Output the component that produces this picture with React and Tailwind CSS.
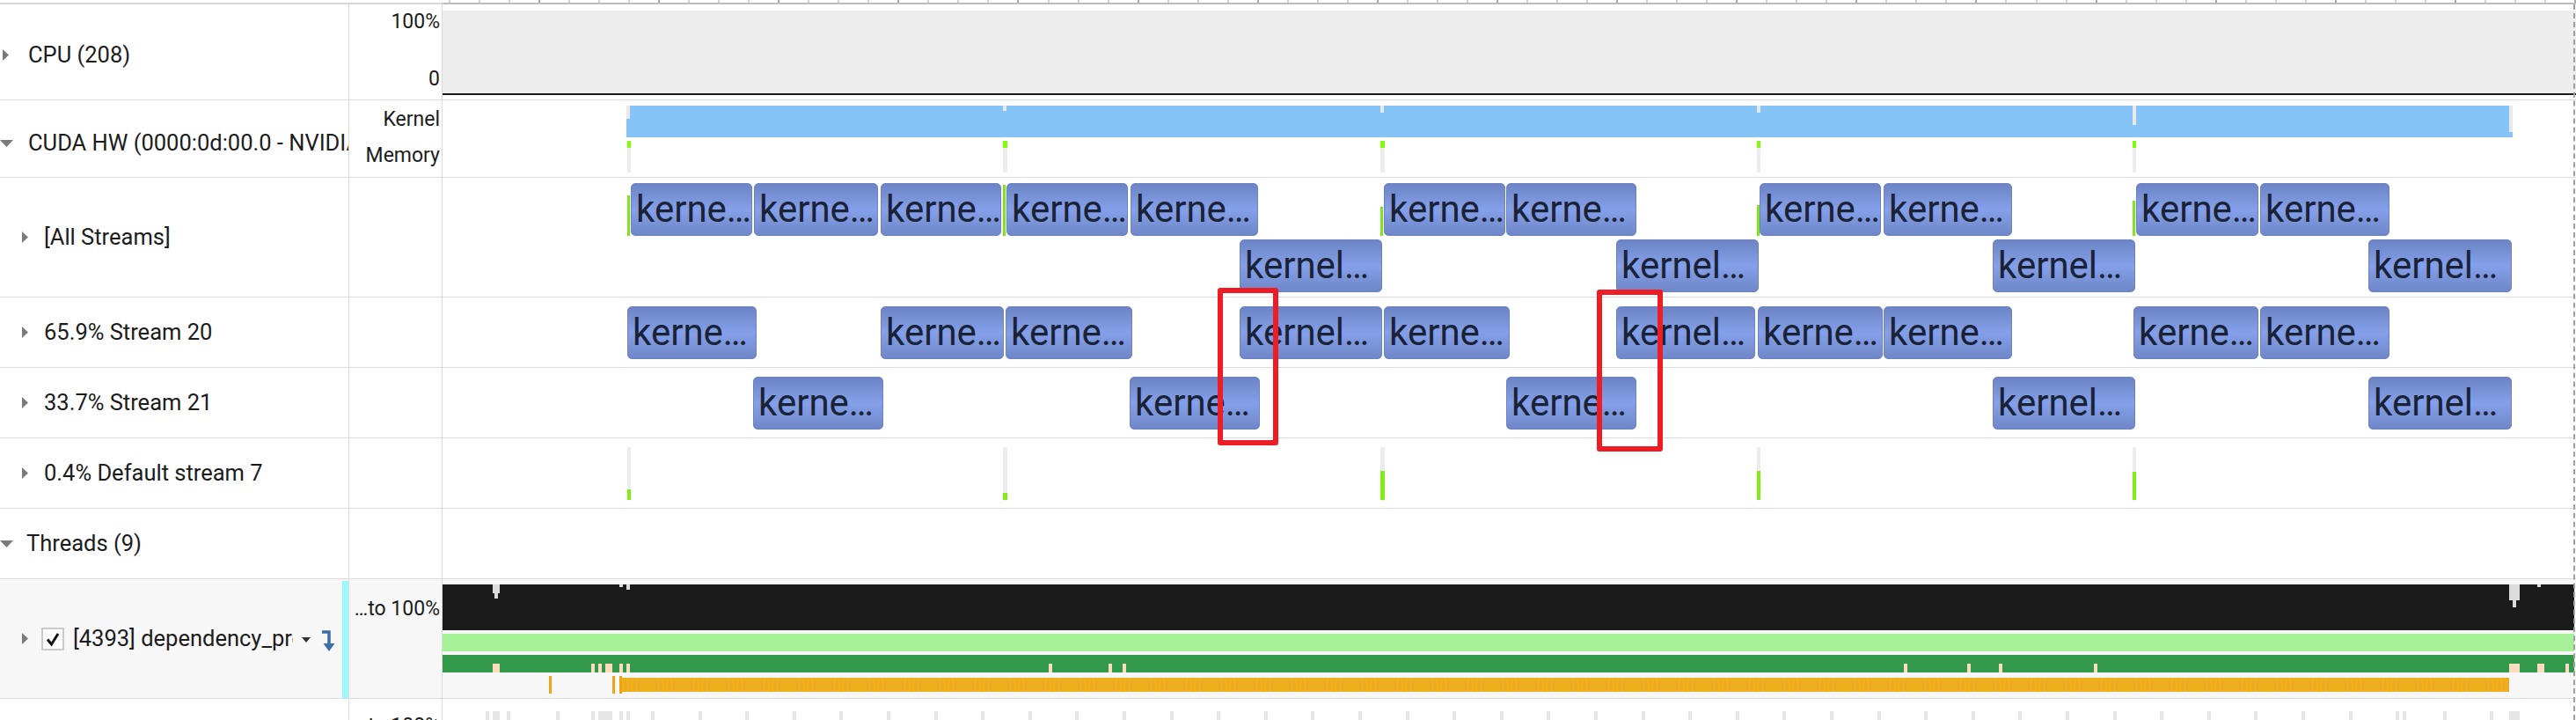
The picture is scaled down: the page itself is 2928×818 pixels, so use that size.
import React from "react";

const T0 = 503;

const allTop = [[717, 855], [857, 998], [1001, 1138], [1144, 1282], [1285, 1430], [1573, 1711], [1712, 1860], [2000, 2138], [2141, 2287], [2428, 2567], [2569, 2716]];
const allBottom = [[1409, 1571], [1837, 1999], [2265, 2427], [2692, 2855]];
const s20 = [[713, 860], [1001, 1141], [1143, 1287], [1409, 1571], [1573, 1716], [1837, 1995], [1998, 2140], [2141, 2287], [2425, 2567], [2569, 2716]];
const s21 = [[856, 1004], [1284, 1432], [1712, 1860], [2265, 2427], [2692, 2855]];

// memory / launch markers at the start of each iteration
const marks = [
  { x: 713, w: 4, streamTop: 222, defGreen: 556 },
  { x: 1140, w: 5, streamTop: 210, defGreen: 560 },
  { x: 1569, w: 5, streamTop: 235, defGreen: 535 },
  { x: 1997, w: 4, streamTop: 233, defGreen: 535 },
  { x: 2424, w: 4, streamTop: 228, defGreen: 536 },
];

const peach = [[560, 8], [672, 4], [680, 4], [688, 8], [704, 4], [712, 4], [1192, 4], [1260, 4], [1276, 4], [2164, 4], [2236, 4], [2272, 4], [2380, 4], [2852, 12], [2884, 8], [2916, 4]];

const lowTicks = (() => {
  const xs = [[552, 4], [560, 8], [576, 4], [632, 4], [672, 4], [680, 16], [704, 4], [712, 4]];
  for (let x = 740; x < 2840; x += 53.6) xs.push([Math.round(x), 4]);
  xs.push([2731, 4], [2852, 12]);
  return xs;
})();

const rulerTicks = (() => {
  const t = [];
  for (let k = -3; k <= 68; k++) t.push({ x: 612 + 34.03 * k, major: k % 4 === 0 });
  return t;
})();

function RightTri() {
  return (
    <svg width="8" height="13" viewBox="0 0 8 13" className="shrink-0">
      <polygon points="0,0 7,6.5 0,13" fill="#7a7a7a" />
    </svg>
  );
}

function DownTri() {
  return (
    <svg width="15" height="8" viewBox="0 0 15 8" className="shrink-0">
      <polygon points="0,0 15,0 7.5,8" fill="#7a7a7a" />
    </svg>
  );
}

function Kernel({ a, b, top }) {
  const label = b - a >= 155 ? "kernel…" : "kerne…";
  return (
    <div
      className="absolute h-[60px] rounded-[5px] border border-[#6b83c2] bg-[linear-gradient(180deg,#6c84c4_0%,#85a0ea_50%,#6f87c7_100%)] overflow-hidden whitespace-nowrap pl-[5px] text-[42px] leading-[57px] text-[#1a2236]"
      style={{ left: a - T0, width: b - a, top }}
    >
      {label}
    </div>
  );
}

function Row({ h, label, value, children, bg = "" }) {
  return (
    <div className={`flex border-b border-[#dcdcdc] ${h} ${bg}`}>
      <div className="w-[397px] shrink-0 border-r border-[#dcdcdc] overflow-hidden relative">{label}</div>
      <div className="w-[106px] shrink-0 border-r border-[#dcdcdc] relative">{value}</div>
      <div className="flex-1 relative">{children}</div>
    </div>
  );
}

export default function App() {
  return (
    <div className="relative w-[2928px] h-[818px] overflow-hidden bg-white font-['Roboto',sans-serif] text-[25.5px] text-[#1c1c1c]">
      {/* ruler */}
      <div className="flex h-[5px]">
        <div className="w-[503px] shrink-0 border-b-2 border-[#d6d6d6]" />
        <div className="flex-1 relative border-b-2 border-[#bcbcbc]">
          {rulerTicks.map((t, i) => (
            <div
              key={i}
              className={`absolute top-0 h-[3px] w-[2px] ${t.major ? "bg-[#a9a9a9]" : "bg-[#d2d2d2]"}`}
              style={{ left: t.x - T0 }}
            />
          ))}
        </div>
      </div>

      {/* CPU */}
      <Row
        h="h-[109px]"
        label={
          <div className="flex items-center h-full pl-[3px] gap-[21px] pt-[6px]">
            <RightTri />
            <span>CPU (208)</span>
          </div>
        }
        value={
          <div className="flex flex-col items-end h-full pr-[2px] text-[23px] leading-none pt-[8px]">
            <span>100%</span>
            <span className="mt-[42px]">0</span>
          </div>
        }
      >
        <div className="absolute left-0 right-0 top-[7px] h-[94px] bg-[#ededed]" />
        <div className="absolute left-0 right-0 top-[101px] h-[2px] bg-[#1a1a1a]" />
      </Row>

      {/* CUDA HW */}
      <Row
        h="h-[88px]"
        label={
          <div className="flex items-center h-full gap-[17px] pt-[10px] whitespace-nowrap">
            <DownTri />
            <span>CUDA HW (0000:0d:00.0 - NVIDIA A100-SXM4-80GB)</span>
          </div>
        }
        value={
          <div className="flex flex-col items-end gap-[17px] pr-[2px] text-[23px] leading-[24px] pt-[10px]">
            <span>Kernel</span>
            <span>Memory</span>
          </div>
        }
      >
        <div className="absolute top-[6px] h-[36px] bg-[#86c3f6]" style={{ left: 712 - T0, width: 2856 - 712 }} />
        {[[712, 15], [1140, 6], [1569, 8], [1997, 8], [2424, 22], [2852, 30]].map(([x, hh], i) => (
          <div key={i} className="absolute top-[6px] w-[4px] bg-[#e8e8e8]" style={{ left: x - T0, height: hh }} />
        ))}
        {marks.map((m, i) => (
          <div key={i} className="absolute top-[46px] h-[36px] flex flex-col" style={{ left: m.x - T0, width: m.w }}>
            <div className="h-[8px] bg-[#7fff00]" />
            <div className="flex-1 bg-[#ececec]" />
          </div>
        ))}
      </Row>

      {/* All Streams */}
      <Row
        h="h-[136px]"
        label={
          <div className="flex items-center h-full pl-[25px] gap-[17px]">
            <RightTri />
            <span>[All Streams]</span>
          </div>
        }
      >
        {marks.map((m, i) => (
          <div
            key={i}
            className="absolute w-[3px] bg-[#7fe41a]"
            style={{ left: m.x - T0, top: m.streamTop - 202, height: 268 - m.streamTop }}
          />
        ))}
        {allTop.map(([a, b], i) => (
          <Kernel key={i} a={a} b={b} top={6} />
        ))}
        {allBottom.map(([a, b], i) => (
          <Kernel key={i} a={a} b={b} top={70} />
        ))}
      </Row>

      {/* Stream 20 */}
      <Row
        h="h-[80px]"
        label={
          <div className="flex items-center h-full pl-[25px] gap-[17px]">
            <RightTri />
            <span>65.9% Stream 20</span>
          </div>
        }
      >
        {s20.map(([a, b], i) => (
          <Kernel key={i} a={a} b={b} top={10} />
        ))}
      </Row>

      {/* Stream 21 */}
      <Row
        h="h-[80px]"
        label={
          <div className="flex items-center h-full pl-[25px] gap-[17px]">
            <RightTri />
            <span>33.7% Stream 21</span>
          </div>
        }
      >
        {s21.map(([a, b], i) => (
          <Kernel key={i} a={a} b={b} top={10} />
        ))}
      </Row>

      {/* Default stream 7 */}
      <Row
        h="h-[80px]"
        label={
          <div className="flex items-center h-full pl-[25px] gap-[17px]">
            <RightTri />
            <span>0.4% Default stream 7</span>
          </div>
        }
      >
        {marks.map((m, i) => (
          <div key={i} className="absolute top-[10px] h-[60px] flex flex-col" style={{ left: m.x - T0, width: m.w }}>
            <div className="bg-[#ececec]" style={{ height: m.defGreen - 508 }} />
            <div className="flex-1 bg-[#7fee10]" />
          </div>
        ))}
      </Row>

      {/* Threads */}
      <Row
        h="h-[80px]"
        label={
          <div className="flex items-center h-full gap-[15px]">
            <DownTri />
            <span>Threads (9)</span>
          </div>
        }
      />

      {/* thread */}
      <Row
        h="h-[136px]"
        bg="bg-[#f7f7f7]"
        label={
          <div className="flex items-center h-full pl-[25px]">
            <RightTri />
            <div className="ml-[14px] w-[26px] h-[26px] border-2 border-[#cbcbcb] bg-white flex items-center justify-center">
              <svg width="18" height="18" viewBox="0 0 18 18">
                <path d="M3 9.5 L7.5 15 L15 3" fill="none" stroke="#111" strokeWidth="3" strokeLinejoin="miter" />
              </svg>
            </div>
            <span className="ml-[10px] w-[250px] overflow-hidden whitespace-nowrap">[4393] dependency_program</span>
            <svg width="10" height="6" viewBox="0 0 10 6" className="ml-[10px] mt-[2px]">
              <polygon points="0,0 10,0 5,6" fill="#333" />
            </svg>
            <svg width="16" height="26" viewBox="0 0 16 26" className="ml-[12px] mt-[4px]">
              <path d="M1 3 H9 V18" fill="none" stroke="#3a6fa8" strokeWidth="3.5" />
              <polygon points="2.5,16 15.5,16 9,25" fill="#3a6fa8" />
            </svg>
            <div className="absolute right-0 top-[2px] bottom-0 w-[7px] bg-[#9bf8ff]" />
          </div>
        }
        value={<div className="text-right pr-[2px] text-[23px] leading-none pt-[22px]">…to 100%</div>}
      >
        <div className="absolute left-0 right-[2px] top-[6px] h-[52px] bg-[#1b1b1b]" />
        {[[560, 8, 10], [562, 4, 16], [704, 4, 3], [712, 4, 6], [2852, 12, 18], [2856, 4, 26], [2884, 4, 3]].map(([x, w, hh], i) => (
          <div key={i} className="absolute top-[6px] bg-[#dcdcdc]" style={{ left: x - T0, width: w, height: hh }} />
        ))}
        <div className="absolute left-0 right-[2px] top-[62px] h-[20px] bg-[#a6f198]" />
        <div className="absolute left-0 right-[2px] top-[86px] h-[20px] bg-[#339a4b]" />
        {peach.map(([x, w], i) => (
          <div key={i} className="absolute top-[96px] h-[10px] bg-[#fcdcc0]" style={{ left: x - T0, width: w }} />
        ))}
        {[624, 696, 704].map((x, i) => (
          <div key={i} className="absolute top-[110px] h-[20px] w-[3px] bg-[#eea515]" style={{ left: x - T0 }} />
        ))}
        <div
          className="absolute top-[112px] h-[16px] bg-[repeating-linear-gradient(90deg,#f5b00c_0px,#f5b00c_3px,#e4aa3c_3px,#e4aa3c_5px)]"
          style={{ left: 707 - T0, width: 2852 - 707 }}
        />
      </Row>

      {/* next thread (cut off) */}
      <Row
        h="h-[80px]"
        value={<div className="text-right pr-[2px] text-[23px] leading-none pt-[19px]">…to 100%</div>}
      >
        {lowTicks.map(([x, w], i) => (
          <div key={i} className="absolute top-[14px] h-[12px] bg-[#e6e6e6]" style={{ left: x - T0, width: w }} />
        ))}
      </Row>

      {/* viewport edge */}
      <div className="absolute left-[2925px] top-[5px] bottom-0 border-l-2 border-dashed border-[#a0a0a0]" />

      {/* annotation boxes */}
      <div className="absolute left-[1384px] top-[327px] w-[69px] h-[179px] border-[6px] border-[#ee1c25] rounded-[3px]" />
      <div className="absolute left-[1815px] top-[329px] w-[75px] h-[184px] border-[6px] border-[#ee1c25] rounded-[3px]" />
    </div>
  );
}
